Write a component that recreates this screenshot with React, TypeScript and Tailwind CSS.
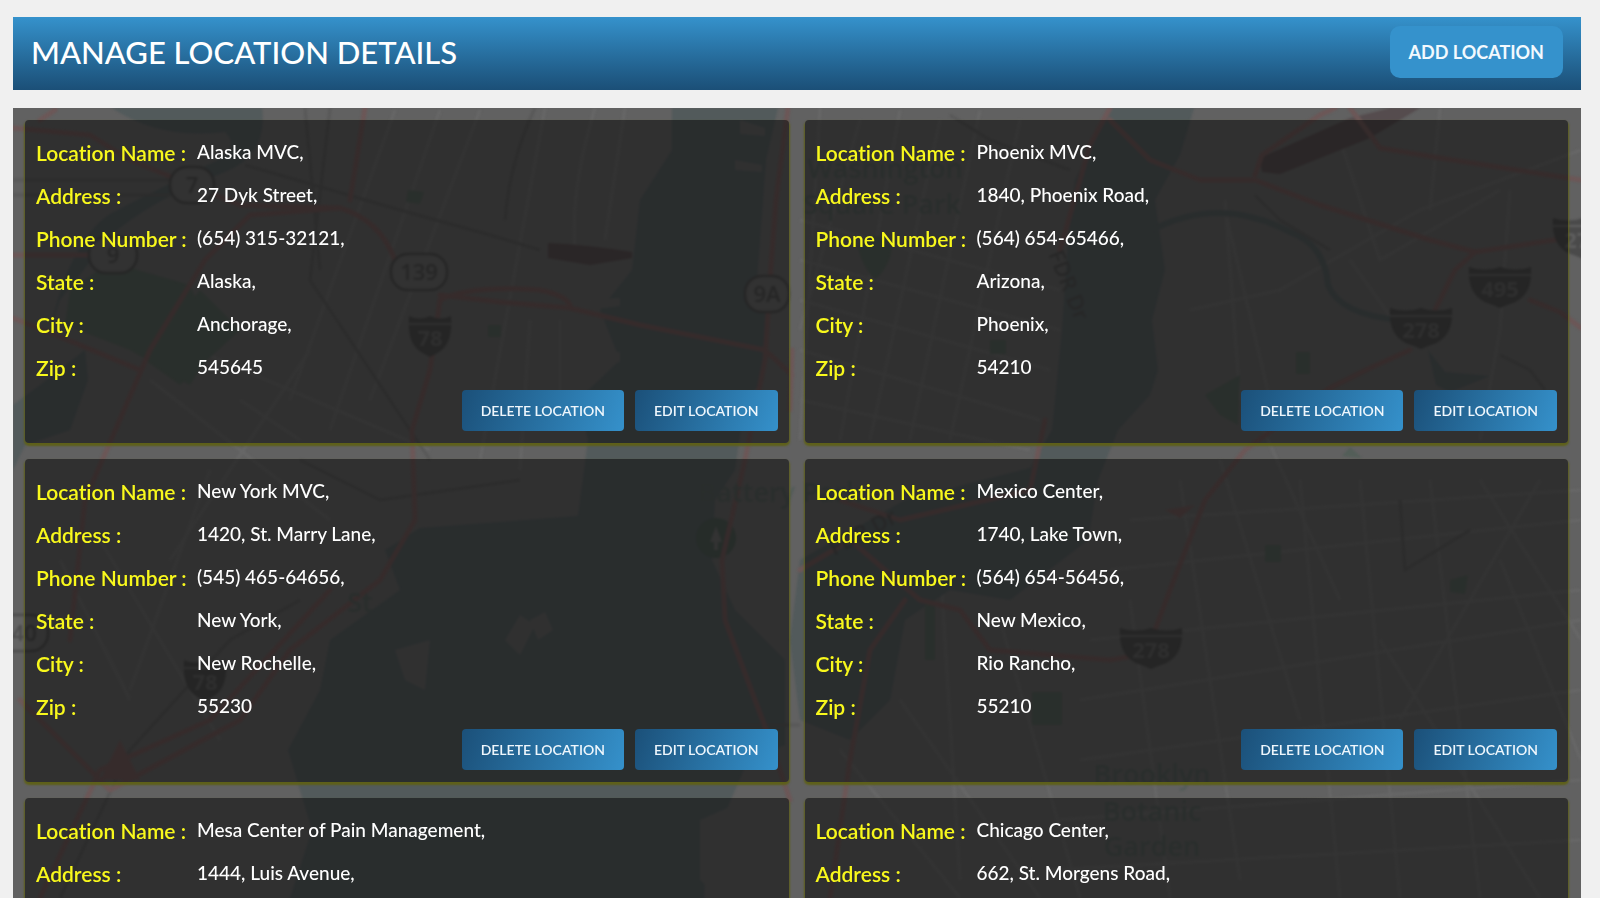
type Field = { label: string; value: string };

const locations: Field[][] = [
  [
    { label: "Location Name :", value: "Alaska MVC," },
    { label: "Address :", value: "27 Dyk Street," },
    { label: "Phone Number :", value: "(654) 315-32121," },
    { label: "State :", value: "Alaska," },
    { label: "City :", value: "Anchorage," },
    { label: "Zip :", value: "545645" },
  ],
  [
    { label: "Location Name :", value: "Phoenix MVC," },
    { label: "Address :", value: "1840, Phoenix Road," },
    { label: "Phone Number :", value: "(564) 654-65466," },
    { label: "State :", value: "Arizona," },
    { label: "City :", value: "Phoenix," },
    { label: "Zip :", value: "54210" },
  ],
  [
    { label: "Location Name :", value: "New York MVC," },
    { label: "Address :", value: "1420, St. Marry Lane," },
    { label: "Phone Number :", value: "(545) 465-64656," },
    { label: "State :", value: "New York," },
    { label: "City :", value: "New Rochelle," },
    { label: "Zip :", value: "55230" },
  ],
  [
    { label: "Location Name :", value: "Mexico Center," },
    { label: "Address :", value: "1740, Lake Town," },
    { label: "Phone Number :", value: "(564) 654-56456," },
    { label: "State :", value: "New Mexico," },
    { label: "City :", value: "Rio Rancho," },
    { label: "Zip :", value: "55210" },
  ],
  [
    { label: "Location Name :", value: "Mesa Center of Pain Management," },
    { label: "Address :", value: "1444, Luis Avenue," },
  ],
  [
    { label: "Location Name :", value: "Chicago Center," },
    { label: "Address :", value: "662, St. Morgens Road," },
  ],
];

function Interstate({ x, y, label, w = 31 }: { x: number; y: number; label: string; w?: number }) {
  return (
    <g transform={`translate(${x} ${y})`}>
      <path
        d={`M${-w} -20 Q${-w / 2} -15 0 -20 Q${w / 2} -15 ${w} -20 Q${w + 2} 6 ${w / 2} 15 Q6 18 0 21 Q-6 18 ${-w / 2} 15 Q${-w - 2} 6 ${-w} -20Z`}
        fill="#4a4a4a"
      />
      <path d={`M${-w} -12H${w}`} stroke="#606060" strokeWidth="2" />
      <text y="10" textAnchor="middle" fontSize="22" fontWeight="700" fill="#5e5e5e">
        {label}
      </text>
    </g>
  );
}

function RouteSign({ x, y, w, label }: { x: number; y: number; w: number; label: string }) {
  return (
    <g transform={`translate(${x} ${y})`}>
      <rect x={-w / 2} y="-18" width={w} height="36" rx="17" fill="#646464" stroke="#4c4c4c" strokeWidth="2.5" />
      <text y="8" textAnchor="middle" fontSize="22" fontWeight="600" fill="#4c4c4c">
        {label}
      </text>
    </g>
  );
}

function MapBackdrop() {
  return (
    <svg
      aria-hidden="true"
      className="pointer-events-none absolute inset-x-0 top-0 h-auto w-full font-['Open_Sans',sans-serif]"
      viewBox="13 108 1568 1040"
      fill="none"
    >
      <rect x="13" y="108" width="1568" height="1040" fill="#616161" />

      <g className="blur-[1px]">
        <g stroke="#676767" strokeWidth="3">
          <path d="M395 110L290 400M440 110L330 430M480 110L370 400M545 108L480 460M595 108Q570 190 575 250M625 108L605 240M530 320L520 470M560 320V400" />
          <path d="M150 380L330 520M150 330L430 450M310 350L170 560M60 560L130 700M100 540L220 740M210 470L130 690M240 400L300 440" />
          <path d="M820 108L800 440M860 120L800 330M900 110L840 440M940 120L870 440M980 110L910 440M1020 120L950 440M800 260L1060 330M800 300L1050 370M800 350L1040 420M800 400L1030 450M800 220L1060 290" />
          <path d="M1225 200L1240 400M1190 310L1280 290L1420 210L1581 150M1225 210L1270 400M1340 140L1380 260L1500 190M1440 108L1430 210M1510 190L1500 330L1480 440M1350 260L1400 330M1250 400L1340 600M1180 480L1240 880" />
          <path d="M1130 520L1581 490M1110 570L1581 520M1090 640L1581 590M1080 700L1581 620M1080 760L1581 690M1060 820L1581 780M1050 870L1581 840M1300 480L1340 898M1360 480L1400 898M1430 480L1480 898M1480 480L1581 640M1540 480L1400 720M1500 560L1581 760M1220 460L1300 720M1130 600L1170 898M940 560L960 880M1000 620L1080 898M900 700L1040 898M840 750L960 898M1380 640L1540 898" />
        </g>

        <g fill="#525a5b">
          <path d="M112 108H262Q268 155 225 172Q150 200 108 238Q90 262 60 300L50 330Q70 240 110 214Q160 188 218 160Q240 146 225 132Q160 140 112 108Z" />
          <path d="M13 405L40 385L85 350L88 380L70 430L25 445L13 470Z" />
          <path d="M672 108H778L766 160L757 280L768 320L764 380L745 400L735 470L715 500L712 560L735 610L785 660V745L748 760L705 860L700 1148H300L290 898L312 830L288 750L320 690L330 640L400 590L385 550L420 528L578 516L588 440L578 400L620 360L600 310L632 270L640 200L672 150Z" />
          <path d="M1108 108H1194L1180 155L1155 200L1165 270L1152 320L1158 370L1150 395L1118 430L1098 480L1088 540L1010 600L950 590L905 620L890 700L850 740L800 720L790 640L800 560L905 500L1030 468L1052 430L1062 330L1068 240L1075 180Z" />
          <path d="M1428 350L1445 372L1490 376L1450 392L1436 385Z" />
        </g>
        <path
          d="M1152 230Q1220 195 1290 232Q1325 245 1328 285Q1340 315 1400 320"
          stroke="#525a5b"
          strokeWidth="6"
        />

        <g fill="#616161">
          <path d="M590 300L620 298V306L590 310ZM570 350L620 352V362L570 366ZM740 120L765 128V136L740 134ZM735 160L762 165V172L735 170Z" />
          <path d="M505 640L520 615L535 625L520 655ZM530 620L545 612L553 630L538 640ZM395 650L430 640L425 690L405 680Z" />
          <path d="M700 820L745 800L750 870L720 898L700 880Z" />
        </g>

        <g fill="#535e58">
          <path d="M70 290L110 262L190 285L215 345L190 385L130 350L65 325Z" />
          <path d="M200 290L240 330L180 385L145 360Z" />
          <path d="M408 190L424 192L420 204L406 202ZM488 325H501V337H488ZM990 340H1006V354H990ZM1296 352H1310V374H1296Z" />
          <path d="M1032 692H1062V725H1032ZM1265 545H1281V562H1265ZM1450 580L1468 575L1465 594L1450 592ZM1342 456L1350 447L1362 458ZM925 600H935V660H925Z" />
          <path d="M1205 395L1240 375L1238 425L1220 415Z" />
          <path d="M858 248A18 18 0 0 1 892 248Q890 266 875 280Q862 266 858 248Z" />
        </g>
        <circle cx="716" cy="538" r="20" fill="#4c5852" />
        <path d="M716 526L722 542H718V550H714V542H710Z" fill="#666" />

        <g stroke="#585858" strokeWidth="3">
          <path d="M305 108L320 270M330 108L310 280L430 460M245 165L400 210L490 235L540 250M535 108Q510 160 505 220M60 898L130 750L230 640L300 600M720 725H800M13 180H200M13 195H170" />
          <path d="M950 115L990 140L1070 170M1255 195L1280 220L1330 250M1500 355L1530 370L1545 390M1400 500L1405 570L1470 530M300 460L380 500L520 480" />
        </g>
        <path
          d="M548 243Q590 245 632 252V258L590 265L548 258ZM1260 158L1350 118L1390 108H1420L1370 138L1280 174L1262 172Z"
          fill="#554c4e"
        />

        <g stroke="#6c5757" strokeWidth="5" strokeLinecap="round" strokeLinejoin="round">
          <path d="M13 128L90 135L130 160L240 205L340 208Q380 220 395 260" />
          <path d="M340 208L250 215L205 260L150 350L85 500L70 640" />
          <path d="M365 108L350 200M13 255L90 255M13 318L80 345L140 370M55 110L40 120" />
          <path d="M440 300Q470 285 540 290Q565 295 570 305M440 295L500 302L570 308L640 325L765 350L792 375" />
          <path d="M440 300L430 370L412 430L415 520L380 580L290 650L240 720L110 790L20 700M330 590L210 720L100 770L40 898" />
          <path d="M788 108L776 200L770 280L765 360L745 460L722 560L725 620L770 740L790 800M792 350L790 410" />
          <path d="M1110 108L1090 145L1060 250M1110 120L1150 160L1200 180H1255L1320 205L1430 240L1475 252L1581 236" />
          <path d="M1255 175L1262 155L1320 115L1335 108M1350 108L1380 148L1440 158L1581 180" />
          <path d="M1475 252L1455 270L1435 310M1410 350L1370 368L1330 388L1245 450L1205 500L1170 590L1155 630M1530 300L1560 312L1581 328" />
          <path d="M1045 420L1030 490L900 520L840 500M800 570L850 540L920 600L960 610L990 650L1110 660L1140 655M905 600L870 650L850 760L830 898" />
        </g>
        <path d="M1165 510L1195 505L1180 518ZM100 780L120 740L140 780Z" fill="#6c5757" />

        <RouteSign x={192} y={185} w={44} label="7" />
        <RouteSign x={113} y={255} w={48} label="9" />
        <RouteSign x={419} y={272} w={56} label="139" />
        <RouteSign x={767} y={294} w={44} label="9A" />
        <RouteSign x={18} y={633} w={60} label="440" />
        <Interstate x={430} y={336} w={21} label="78" />
        <Interstate x={205} y={680} w={21} label="78" />
        <Interstate x={1421} y={328} label="278" />
        <Interstate x={1500} y={287} label="495" />
        <Interstate x={1151} y={648} label="278" />
        <Interstate x={1583} y={238} w={30} label="278" />

        <g fontSize="27" fontWeight="600" textAnchor="middle" fill="#535c59">
          <text x="885" y="178">Washington</text>
          <text x="882" y="214">Square Park</text>
          <text x="780" y="502">Battery Park</text>
          <text x="1152" y="784">Brooklyn</text>
          <text x="1152" y="821">Botanic</text>
          <text x="1152" y="856">Garden</text>
          <text x="360" y="612">St</text>
        </g>
        <g fontSize="22" fontWeight="600" fill="#4e4e4e">
          <text transform="translate(1048 254) rotate(68)">FDR Dr</text>
          <text transform="translate(834 556) rotate(-28)">FDR Dr</text>
        </g>
      </g>
    </svg>
  );
}

function CardButton({ children }: { children: string }) {
  return (
    <button
      type="button"
      className="h-[41px] cursor-pointer rounded-[4px] bg-linear-[110deg] from-[#1b5079] to-[#3591cb] px-[19px] text-sm font-semibold text-[#eef6fc] hover:brightness-110"
    >
      {children}
    </button>
  );
}

function LocationCard({ fields }: { fields: Field[] }) {
  return (
    <article className="flex min-h-[323px] flex-col rounded-[4px] bg-black/50 px-[11px] py-3 shadow-[0_2px_2px_1px_#5e6019]">
      <dl>
        {fields.map((field) => (
          <div key={field.label} className="flex h-[43px] items-start">
            <dt className="w-40 shrink-0 text-[21px] leading-[42px] font-semibold text-[#f8f81c]">{field.label}</dt>
            <dd className="pl-px text-[19px] leading-[39px] text-white">{field.value}</dd>
          </div>
        ))}
      </dl>
      <div className="mt-auto flex justify-end gap-[11px]">
        <CardButton>DELETE LOCATION</CardButton>
        <CardButton>EDIT LOCATION</CardButton>
      </div>
    </article>
  );
}

export default function App() {
  return (
    <div className="h-screen overflow-y-auto bg-[#f0f0f0] pt-[17px] pr-[19px] pb-4 pl-[13px] font-['Lato','Open_Sans',sans-serif] font-medium [font-variant-ligatures:none] [scrollbar-width:none]">
      <header className="flex h-[73px] items-center justify-between bg-linear-to-b from-[#3592cc] to-[#1b4f77] px-[18px] pb-[3px]">
        <h1 className="text-[31px] leading-none text-white">MANAGE LOCATION DETAILS</h1>
        <button
          type="button"
          className="h-[52px] cursor-pointer rounded-[10px] bg-[#3592cc] px-[19px] text-lg font-bold text-[#f2f9fe] hover:brightness-110"
        >
          ADD LOCATION
        </button>
      </header>

      <main className="relative mt-[18px] overflow-hidden bg-[#616161] py-3 pr-[13px] pl-3">
        <MapBackdrop />
        <div className="relative grid grid-cols-2 gap-4">
          {locations.map((fields) => (
            <LocationCard key={fields[0].value} fields={fields} />
          ))}
        </div>
      </main>
    </div>
  );
}
